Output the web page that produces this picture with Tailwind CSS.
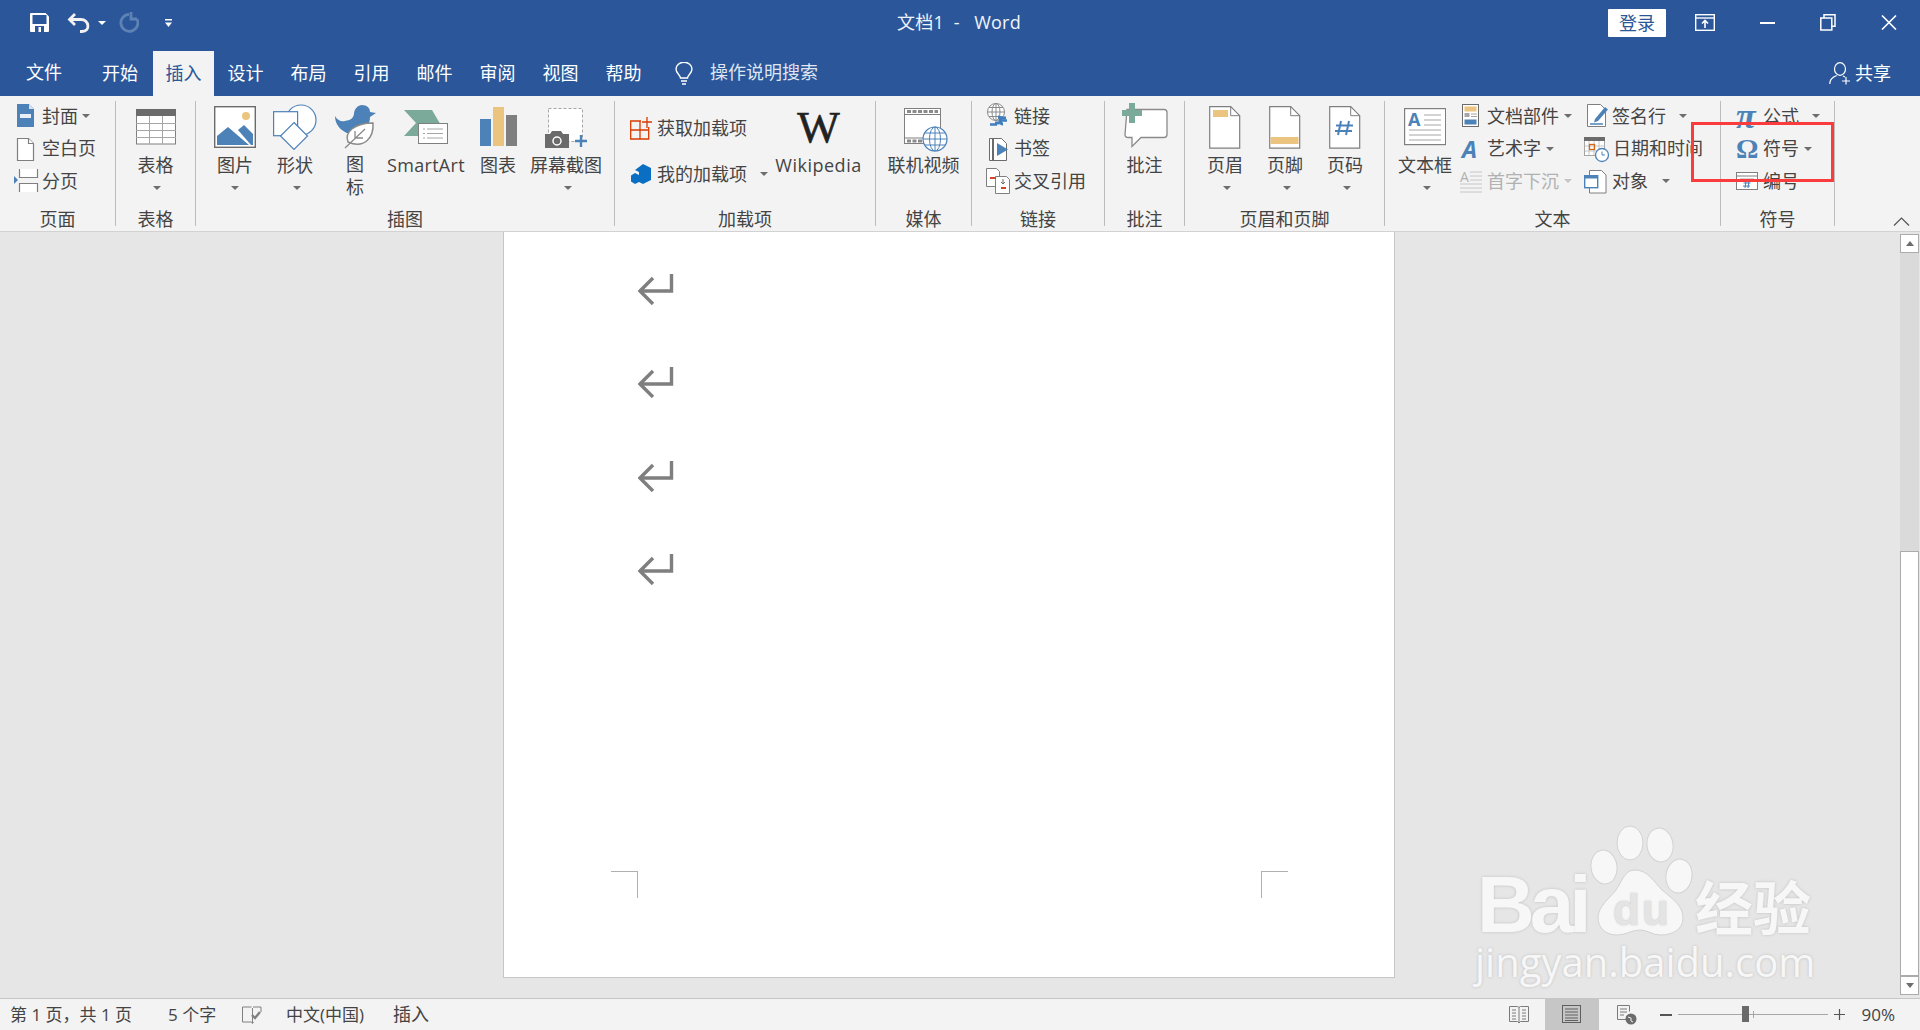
<!DOCTYPE html>
<html lang="zh-CN">
<head>
<meta charset="UTF-8">
<title>文档1 - Word</title>
<script src="https://cdn.jsdelivr.net/npm/@tailwindcss/browser@4"></script>
</head>
<body class="font-['Open_Sans','Noto_Sans_CJK_SC',sans-serif] text-[18px] text-[#444444]">
<div class="w-[1920px] h-[1030px] flex flex-col overflow-hidden relative">

  <!-- title bar + tabs -->
  <div class="h-[96px] bg-[#2b579a] text-white shrink-0">
    <div class="h-[45px] flex items-center">
      <div class="w-[897px] flex items-center pl-[30px]">
        <svg class="w-[19px] h-[19px]" viewBox="0 0 19 19"><path d="M0 1a1 1 0 0 1 1-1h14.500L19 3.500V18a1 1 0 0 1-1 1H1a1 1 0 0 1-1-1z" fill="#fff"/><rect x="2.500" y="2" width="14" height="9" fill="#2b579a"/><rect x="5" y="13" width="9" height="6" fill="#2b579a"/><rect x="8.500" y="14" width="2.500" height="5" fill="#fff"/></svg>
        <svg class="w-[23px] h-[20px] ml-[18px]" viewBox="0 0 23 20" fill="none" stroke="#f2f2f2" stroke-width="2.800"><path d="M8 1 2.500 6.500 8 12"/><path d="M3 6.500h11c8 0 10 12 1 12h-2"/></svg>
        <span class="ml-[8px] border-x-[4px] border-t-[4px] border-x-transparent border-t-white"></span>
        <svg class="w-[20px] h-[22px] ml-[13px]" viewBox="0 0 20 22" fill="none" stroke="#5f82b5" stroke-width="2.800"><path d="M10 2.300A8.500 8.500 0 1 0 18 7"/><path d="M12 0v7h6"/></svg>
        <svg class="w-[7px] h-[8px] ml-[26px]" viewBox="0 0 7 8" fill="#fff"><rect width="7" height="1.500"/><path d="M0 3.500h7L3.500 8z"/></svg>
      </div>
      <div class="w-[123px] whitespace-pre text-[#f0f4fa] tracking-[0.2px]">文档1  -   Word</div>
      <div class="ml-[588px] w-[58px] h-[28px] bg-white text-[#2b579a] text-center leading-[28px] rounded-[1px]">登录</div>
      <svg class="w-[20px] h-[17px] ml-[29px]" viewBox="0 0 20 17" fill="none" stroke="#fff" stroke-width="1.400"><rect x=".7" y=".7" width="18.600" height="15.600"/><path d="M.7 4h18.600"/><path d="M10 14V7M7 9.500 10 6.500l3 3" stroke-width="1.600"/></svg>
      <div class="w-[15px] h-[2px] bg-white ml-[45px]"></div>
      <svg class="w-[16px] h-[17px] ml-[45px]" viewBox="0 0 16 17" fill="none" stroke="#fff" stroke-width="1.500"><rect x=".8" y="4" width="11" height="12"/><path d="M4 4V.8h11v11.500h-3"/></svg>
      <svg class="w-[16px] h-[15px] ml-[45px]" viewBox="0 0 16 15" stroke="#fff" stroke-width="1.600"><path d="m1 .5 14 14M15 .5l-14 14"/></svg>
    </div>
    <div class="h-[45px] mt-[6px] flex items-center">
      <div class="w-[91px] pl-[26px] -mt-[2px]">文件</div>
      <div class="w-[62px] pl-[11px]">开始</div>
      <div class="w-[61px] h-[45px] leading-[45px] bg-[#f3f3f3] text-[#2b579a] text-center">插入</div>
      <div class="w-[63px] text-center">设计</div>
      <div class="w-[63px] text-center">布局</div>
      <div class="w-[63px] text-center">引用</div>
      <div class="w-[63px] text-center">邮件</div>
      <div class="w-[63px] text-center">审阅</div>
      <div class="w-[63px] text-center">视图</div>
      <div class="w-[63px] text-center">帮助</div>
      <svg class="w-[20px] h-[24px] ml-[19px]" viewBox="0 0 20 24" fill="none" stroke="#fff" stroke-width="1.400"><path d="M6.500 16c0-3-4.500-4.500-4.500-9a8 6.800 0 0 1 16 0c0 4.500-4.500 6-4.500 9z"/><path d="M7 19h6M8 22h4"/></svg>
      <div class="ml-[16px] -mt-[2px] text-[#dfe6f1]">操作说明搜索</div>
      <svg class="w-[23px] h-[23px] ml-auto" viewBox="0 0 23 23" fill="none" stroke="#fff" stroke-width="1.200"><ellipse cx="11" cy="7" rx="5.500" ry="6.300"/><path d="M.7 22c0-5 3-7 7-8.500M14 14l2 1"/><path d="M17 15v7.500M13 19h8"/></svg>
      <div class="ml-[3px] mr-[29px] -mt-[1px]">共享</div>
    </div>
  </div>

  <!-- ribbon -->
  <div class="h-[136px] bg-[#f3f3f3] border-b border-[#d2d2d2] flex items-start shrink-0 relative">

    <!-- 页面 -->
    <div class="w-[116px] h-[125px] mt-[5px] border-r border-[#bdbdbd] flex flex-col">
      <div class="h-[106px] shrink-0 pl-[14px] flex flex-col">
        <div class="h-[32.500px] -mt-[1px] flex items-center">
          <svg class="w-[28px] h-[28px] shrink-0" viewBox="0 0 28 28"><path d="M3 2h12l5 5v18H3z" fill="#4d82b8"/><path d="M15 2l5 5h-5z" fill="#d6e2ef"/><path d="M6 12h11v4H6z" fill="#e9eff6"/></svg>
          <span>封面</span><span class="ml-[4px] border-x-[4px] border-t-[4px] border-x-transparent border-t-[#6d6d6d]"></span>
        </div>
        <div class="h-[32.500px] flex items-center">
          <svg class="w-[28px] h-[28px] shrink-0" viewBox="0 0 28 28" fill="#fff" stroke="#7f7f7f" stroke-width="1.200"><path d="M3.500 3.500h11l5 5v17h-16z"/><path d="M14.500 3.500v5h5" /></svg>
          <span>空白页</span>
        </div>
        <div class="h-[32.500px] flex items-center">
          <svg class="w-[28px] h-[28px] shrink-0" viewBox="0 0 28 28"><path d="M0 9v8l4-4z" fill="#4d82b8"/><path d="M5.500 2v8.500h18V2" fill="#fff" stroke="#7f7f7f" stroke-width="1.200"/><path d="M5.500 25v-8.500h18V25" fill="#fff" stroke="#7f7f7f" stroke-width="1.200"/></svg>
          <span>分页</span>
        </div>
      </div>
      <div class="h-[24px] shrink-0 leading-[24px] text-center">页面</div>
    </div>

    <!-- 表格 -->
    <div class="w-[80px] h-[125px] mt-[5px] border-r border-[#bdbdbd] flex flex-col">
      <div class="h-[106px] shrink-0 flex flex-col items-center">
        <svg class="w-[40px] h-[52px]" viewBox="0 0 40 52"><rect x=".5" y="8.500" width="39" height="34.500" fill="#fff" stroke="#7f7f7f"/><rect y="8" width="40" height="7" fill="#6b6b6b"/><path d="M0 22.500h40M0 29.500h40M0 36.500h40M13.500 15v28M26.500 15v28" stroke="#a6a6a6"/></svg>
        <div class="h-[24px] leading-[24px]">表格</div>
        <div class="h-[22px] ml-[2px] flex items-center"><span class="border-x-[4px] border-t-[4px] border-x-transparent border-t-[#6d6d6d]"></span></div>
      </div>
      <div class="h-[24px] shrink-0 leading-[24px] text-center">表格</div>
    </div>

    <!-- 插图 -->
    <div class="w-[419px] h-[125px] mt-[5px] border-r border-[#bdbdbd] flex flex-col">
      <div class="h-[106px] shrink-0 flex pl-[9px]">
        <div class="w-[60px] flex flex-col items-center">
          <svg class="w-[42px] h-[52px]" viewBox="0 0 42 52"><rect x=".7" y="5.700" width="40.600" height="40.600" fill="#fff" stroke="#6b6b6b" stroke-width="1.400"/><circle cx="32" cy="15" r="4" fill="#ebc47f"/><path d="M3 44v-9l11-9 21 18z" fill="#4d82b8"/><path d="M24 29l6-5 9 9v11h-2z" fill="#4d82b8"/></svg>
          <div class="h-[24px] leading-[24px]">图片</div>
          <div class="h-[22px] flex items-center"><span class="border-x-[4px] border-t-[4px] border-x-transparent border-t-[#6d6d6d]"></span></div>
        </div>
        <div class="w-[60px] flex flex-col items-center">
          <svg class="w-[44px] h-[52px]" viewBox="0 0 44 52" fill="#fff" stroke="#4d82b8" stroke-width="1.200"><circle cx="28" cy="19" r="15"/><rect x=".6" y="10.700" width="24" height="24"/><path d="M21 21.500 34.500 35 21 48.500 7.500 35z"/></svg>
          <div class="h-[24px] leading-[24px]">形状</div>
          <div class="h-[22px] ml-[4px] flex items-center"><span class="border-x-[4px] border-t-[4px] border-x-transparent border-t-[#6d6d6d]"></span></div>
        </div>
        <div class="w-[60px] flex flex-col items-center">
          <svg class="w-[41px] h-[52px]" viewBox="0 0 41 52"><path d="M0 15c2 4 6 6 10 5 5-1 8-2 9-7 0-5 4-9 8-9 5 0 8 3 8 7l6 1-6 4c0 8-5 15-13 17C12 35 0 27 0 15z" fill="#4d82b8"/><path d="M13 41C9 31 20 22 38 22c1 15-9 26-25 19z" fill="#fff" stroke="#8a8a8a" stroke-width="1.500"/><path d="M10 47 30 28M20 37v-7M20 37h8" fill="none" stroke="#8a8a8a" stroke-width="1.300"/></svg>
          <div class="h-[23px] leading-[23px]">图</div>
          <div class="h-[23px] leading-[23px]">标</div>
        </div>
        <div class="w-[82px] flex flex-col items-center">
          <svg class="w-[44px] h-[52px]" viewBox="0 0 44 52"><path d="M0 9h28l10 17-10 9H0l12-13z" fill="#7ba99a"/><rect x="14.500" y="22.500" width="29" height="20" fill="#fff" stroke="#7f7f7f"/><path d="M19 28h2M23 28h16M19 32.500h2M23 32.500h16M19 37h2M23 37h16" stroke="#a6a6a6"/></svg>
          <div class="h-[24px] leading-[24px] tracking-[0.3px]">SmartArt</div>
        </div>
        <div class="w-[62px] flex flex-col items-center">
          <svg class="w-[37px] h-[52px]" viewBox="0 0 37 52"><rect y="18" width="11" height="27" fill="#4d82b8"/><rect x="13" y="6" width="11" height="39" fill="#ebc47f"/><rect x="26" y="14" width="11" height="31" fill="#7f7f7f"/></svg>
          <div class="h-[24px] leading-[24px]">图表</div>
        </div>
        <div class="w-[74px] flex flex-col items-center">
          <svg class="w-[42px] h-[52px]" viewBox="0 0 42 52"><rect x="3.500" y="7.500" width="34" height="33" fill="#fff" stroke="#a6a6a6" stroke-dasharray="3 2"/><path d="M0 33h5l2-3h9l2 3h6v14H0z" fill="#6b6b6b"/><circle cx="12" cy="40" r="4" fill="none" stroke="#fff" stroke-width="1.500"/><path d="M30 40h12M36 34v12" stroke="#4d82b8" stroke-width="2.400"/></svg>
          <div class="h-[24px] leading-[24px]">屏幕截图</div>
          <div class="h-[22px] ml-[4px] flex items-center"><span class="border-x-[4px] border-t-[4px] border-x-transparent border-t-[#6d6d6d]"></span></div>
        </div>
      </div>
      <div class="h-[24px] shrink-0 leading-[24px] text-center">插图</div>
    </div>

    <!-- 加载项 -->
    <div class="w-[261px] h-[125px] mt-[5px] border-r border-[#bdbdbd] flex flex-col">
      <div class="h-[106px] shrink-0 flex">
        <div class="w-[160px] pl-[15px] pt-[4px] flex flex-col">
          <div class="h-[46px] flex items-center">
            <svg class="w-[27px] h-[24px] shrink-0" viewBox="0 0 27 24" fill="none" stroke="#d83b01" stroke-width="1.300"><path d="M11 5H.7v18h18v-12M.7 14h18M10 5v18"/><path d="M17 1v11M12 6h10"/></svg>
            <span>获取加载项</span>
          </div>
          <div class="h-[46px] flex items-center">
            <svg class="w-[27px] h-[22px] shrink-0" viewBox="0 0 27 22"><path d="M13 1l8 4v12l-8 4-4-2V9L5 7z" fill="#0a6fc2"/><path d="M5 10l5 2.500v6L5 21 1 18.500v-6z" fill="#0a6fc2"/></svg>
            <span>我的加载项</span><span class="ml-[13px] border-x-[4px] border-t-[4px] border-x-transparent border-t-[#6d6d6d]"></span>
          </div>
        </div>
        <div class="w-[87px] flex flex-col items-center">
          <div class="h-[52px] flex items-center font-['Liberation_Serif',serif] text-[45px] leading-none text-[#222222] [-webkit-text-stroke:0.6px_#222222]">W</div>
          <div class="h-[24px] leading-[24px] tracking-[0.5px]">Wikipedia</div>
        </div>
      </div>
      <div class="h-[24px] shrink-0 leading-[24px] text-center">加载项</div>
    </div>

    <!-- 媒体 -->
    <div class="w-[96px] h-[125px] mt-[5px] border-r border-[#bdbdbd] flex flex-col">
      <div class="h-[106px] shrink-0 flex flex-col items-center">
        <svg class="w-[44px] h-[52px] ml-[4px]" viewBox="0 0 44 52"><rect x=".5" y="7.500" width="36" height="35" fill="#fff" stroke="#7f7f7f"/><path d="M.5 13.500h36M.5 37h36" stroke="#7f7f7f"/><path d="M3 10.500h31M3 40h31" stroke="#8a8a8a" stroke-width="3" stroke-dasharray="4 1.500"/><circle cx="31" cy="38" r="12" fill="#fff" stroke="#4d82b8" stroke-width="1.200"/><ellipse cx="31" cy="38" rx="5.500" ry="12" fill="none" stroke="#4d82b8"/><path d="M19 38h24M21 32h20M21 44h20M31 26v24" stroke="#4d82b8"/></svg>
        <div class="h-[24px] leading-[24px]">联机视频</div>
      </div>
      <div class="h-[24px] shrink-0 leading-[24px] text-center">媒体</div>
    </div>

    <!-- 链接 -->
    <div class="w-[133px] h-[125px] mt-[5px] border-r border-[#bdbdbd] flex flex-col">
      <div class="h-[106px] shrink-0 pl-[14px] flex flex-col">
        <div class="h-[32.500px] -mt-[1px] flex items-center">
          <svg class="w-[28px] h-[28px] shrink-0" viewBox="0 0 28 28"><circle cx="10" cy="10" r="8.500" fill="#fff" stroke="#8a8a8a"/><path d="M1.500 10h17M3 5.500h14M3 14.500h14M10 1.500v17" stroke="#8a8a8a"/><ellipse cx="10" cy="10" rx="4" ry="8.500" fill="none" stroke="#8a8a8a"/><path d="M9 21h3a3 3 0 0 0 0-6M20 16h-3a3 3 0 0 0 0 6" fill="none" stroke="#3f7fbf" stroke-width="3"/><path d="M4 22.500h7M13 18.500h8" stroke="#3f7fbf" stroke-width="2.500"/></svg>
          <span>链接</span>
        </div>
        <div class="h-[32.500px] flex items-center">
          <svg class="w-[28px] h-[28px] shrink-0" viewBox="0 0 28 28"><path d="M3.500 3.500h12l5 5v17h-17z" fill="#fff" stroke="#6b6b6b"/><rect x="6" y="4" width="2" height="21" fill="#6b6b6b"/><path d="M11 8l11 6.500L11 21z" fill="#4d82b8"/></svg>
          <span>书签</span>
        </div>
        <div class="h-[32.500px] flex items-center">
          <svg class="w-[28px] h-[28px] shrink-0" viewBox="0 0 28 28"><path d="M.5 1.500h10l3 3v15H.5z" fill="#fff" stroke="#7f7f7f"/><path d="M9.500 9.500h11l3 3v14h-14z" fill="#fff" stroke="#7f7f7f"/><rect x="4" y="10" width="6" height="2" fill="#d0452b"/><rect x="15" y="20" width="5" height="2" fill="#d0452b"/><path d="M17 12v5M15 15l2 2 2-2" fill="none" stroke="#6b6b6b"/></svg>
          <span>交叉引用</span>
        </div>
      </div>
      <div class="h-[24px] shrink-0 leading-[24px] text-center">链接</div>
    </div>

    <!-- 批注 -->
    <div class="w-[80px] h-[125px] mt-[5px] border-r border-[#bdbdbd] flex flex-col">
      <div class="h-[106px] shrink-0 flex flex-col items-center">
        <svg class="w-[46px] h-[52px]" viewBox="0 0 46 52"><path d="M5 8.500h37a3 3 0 0 1 3 3v22a3 3 0 0 1-3 3H19l-9 9v-9H6a3 3 0 0 1-3-3z" fill="#fff" stroke="#8a8a8a" stroke-width="1.300"/><path d="M10 2v20M0 12h20" stroke="#7ba99a" stroke-width="6"/></svg>
        <div class="h-[24px] leading-[24px]">批注</div>
      </div>
      <div class="h-[24px] shrink-0 leading-[24px] text-center">批注</div>
    </div>

    <!-- 页眉和页脚 -->
    <div class="w-[200px] h-[125px] mt-[5px] border-r border-[#bdbdbd] flex flex-col">
      <div class="h-[106px] shrink-0 flex pl-[10px]">
        <div class="w-[60px] flex flex-col items-center">
          <svg class="w-[32px] h-[52px]" viewBox="0 0 32 52"><path d="M.7 5.700h21l9 9v32.500H.7z" fill="#fff" stroke="#7f7f7f" stroke-width="1.200"/><path d="M21.700 5.700v9h9" fill="none" stroke="#7f7f7f"/><rect x="4" y="9" width="15" height="7" fill="#ebc47f"/></svg>
          <div class="h-[24px] leading-[24px]">页眉</div>
          <div class="h-[22px] ml-[4px] flex items-center"><span class="border-x-[4px] border-t-[4px] border-x-transparent border-t-[#6d6d6d]"></span></div>
        </div>
        <div class="w-[60px] flex flex-col items-center">
          <svg class="w-[32px] h-[52px]" viewBox="0 0 32 52"><path d="M.7 5.700h21l9 9v32.500H.7z" fill="#fff" stroke="#7f7f7f" stroke-width="1.200"/><path d="M21.700 5.700v9h9" fill="none" stroke="#7f7f7f"/><rect x="1.500" y="36" width="28" height="7" fill="#ebc47f"/></svg>
          <div class="h-[24px] leading-[24px]">页脚</div>
          <div class="h-[22px] ml-[4px] flex items-center"><span class="border-x-[4px] border-t-[4px] border-x-transparent border-t-[#6d6d6d]"></span></div>
        </div>
        <div class="w-[60px] flex flex-col items-center">
          <svg class="w-[32px] h-[52px]" viewBox="0 0 32 52"><path d="M.7 5.700h21l9 9v32.500H.7z" fill="#fff" stroke="#7f7f7f" stroke-width="1.200"/><path d="M21.700 5.700v9h9" fill="none" stroke="#7f7f7f"/><path d="M12 20l-3 14M20 20l-3 14M7 24.500h17M6 30h17" stroke="#4d82b8" stroke-width="2"/></svg>
          <div class="h-[24px] leading-[24px]">页码</div>
          <div class="h-[22px] ml-[4px] flex items-center"><span class="border-x-[4px] border-t-[4px] border-x-transparent border-t-[#6d6d6d]"></span></div>
        </div>
      </div>
      <div class="h-[24px] shrink-0 leading-[24px] text-center">页眉和页脚</div>
    </div>

    <!-- 文本 -->
    <div class="w-[336px] h-[125px] mt-[5px] border-r border-[#bdbdbd] flex flex-col">
      <div class="h-[106px] shrink-0 flex">
        <div class="w-[80px] -mr-[6px] flex flex-col items-center shrink-0">
          <svg class="w-[42px] h-[52px]" viewBox="0 0 42 52"><rect x=".6" y="7.600" width="41" height="36" fill="#fff" stroke="#7f7f7f" stroke-width="1.200"/><text x="4" y="25" font-size="18" font-weight="700" fill="#4d82b8">A</text><path d="M20 14h17M20 19h17M20 24h17M5 29h32M5 34h32M5 39h32" stroke="#a6a6a6"/></svg>
          <div class="h-[24px] leading-[24px]">文本框</div>
          <div class="h-[22px] ml-[4px] flex items-center"><span class="border-x-[4px] border-t-[4px] border-x-transparent border-t-[#6d6d6d]"></span></div>
        </div>
        <div class="w-[125px] flex flex-col shrink-0">
          <div class="h-[32.500px] -mt-[1px] flex items-center">
            <svg class="w-[28px] h-[28px] shrink-0" viewBox="0 0 28 28"><rect x="3.500" y="2.500" width="16" height="22" fill="#fff" stroke="#6b6b6b"/><rect x="5.500" y="4.500" width="12" height="5" fill="#ebc47f"/><rect x="5.500" y="11" width="5" height="4" fill="#a6a6a6"/><path d="M12 12h6M12 14.500h6" stroke="#a6a6a6"/><rect x="5.500" y="17.500" width="12" height="5" fill="#4d82b8"/></svg>
            <span>文档部件</span><span class="ml-[5px] border-x-[4px] border-t-[4px] border-x-transparent border-t-[#6d6d6d]"></span>
          </div>
          <div class="h-[32.500px] flex items-center">
            <span class="w-[28px] shrink-0 pl-[3px] text-[#4d82b8] text-[24px] leading-none font-bold italic">A</span>
            <span>艺术字</span><span class="ml-[5px] border-x-[4px] border-t-[4px] border-x-transparent border-t-[#6d6d6d]"></span>
          </div>
          <div class="h-[32.500px] flex items-center text-[#b1b1b1]">
            <svg class="w-[28px] h-[28px] shrink-0" viewBox="0 0 28 28"><text x="1" y="15" font-size="14" fill="#b1b1b1">A</text><path d="M11 5h12M11 9h12M11 13h12M1 17h22M1 21h22M1 25h22" stroke="#c6c6c6"/></svg>
            <span>首字下沉</span><span class="ml-[5px] border-x-[4px] border-t-[4px] border-x-transparent border-t-[#c4c4c4]"></span>
          </div>
        </div>
        <div class="flex-1 flex flex-col">
          <div class="h-[32.500px] -mt-[1px] flex items-center">
            <svg class="w-[28px] h-[28px] shrink-0" viewBox="0 0 28 28"><path d="M3.500 2.500h13l5 5v17h-18z" fill="#fff" stroke="#7f7f7f"/><path d="M11 17 21 5l3 2.500L14 19l-4 1.500z" fill="#4d82b8"/><path d="M6 22h13" stroke="#4d82b8" stroke-width="1.500"/></svg>
            <span>签名行</span><span class="ml-[13px] border-x-[4px] border-t-[4px] border-x-transparent border-t-[#6d6d6d]"></span>
          </div>
          <div class="h-[32.500px] flex items-center">
            <svg class="w-[29px] h-[28px] shrink-0" viewBox="0 0 29 28"><rect x=".5" y="2.500" width="20" height="18" fill="#fff" stroke="#a6a6a6"/><rect y="2" width="21" height="4" fill="#6b6b6b"/><path d="M5 6v14M10 6v14M15 6v14M1 11h19M1 16h19" stroke="#c6c6c6"/><rect x="5.500" y="9.500" width="5" height="5" fill="none" stroke="#d2691e" stroke-width="1.300"/><circle cx="18" cy="20" r="6.500" fill="#fff" stroke="#4d82b8" stroke-width="1.300"/><path d="M18 16.500V20h3" fill="none" stroke="#4d82b8"/></svg>
            <span>日期和时间</span>
          </div>
          <div class="h-[32.500px] flex items-center">
            <svg class="w-[28px] h-[28px] shrink-0" viewBox="0 0 28 28"><path d="M5.500 3.500h12l4.500 4.500v18h-16.500z" fill="#fff" stroke="#7f7f7f"/><rect x=".7" y="8.700" width="13" height="12" fill="#fff" stroke="#4d82b8" stroke-width="1.400"/><rect y="8" width="14" height="3.500" fill="#4d82b8"/></svg>
            <span>对象</span><span class="ml-[14px] border-x-[4px] border-t-[4px] border-x-transparent border-t-[#6d6d6d]"></span>
          </div>
        </div>
      </div>
      <div class="h-[24px] shrink-0 leading-[24px] text-center">文本</div>
    </div>

    <!-- 符号 -->
    <div class="w-[114px] h-[125px] mt-[5px] border-r border-[#bdbdbd] flex flex-col">
      <div class="h-[106px] shrink-0 pl-[15px] flex flex-col">
        <div class="h-[32.500px] -mt-[1px] flex items-center">
          <span class="w-[27px] shrink-0 font-['Liberation_Serif',serif] text-[#4d82b8] text-[36px] leading-[24px] font-bold italic">π</span>
          <span>公式</span><span class="ml-[13px] border-x-[4px] border-t-[4px] border-x-transparent border-t-[#6d6d6d]"></span>
        </div>
        <div class="h-[32.500px] flex items-center">
          <span class="w-[27px] shrink-0 font-['Liberation_Serif',serif] text-[#4d82b8] text-[28px] leading-none font-bold">Ω</span>
          <span>符号</span><span class="ml-[5px] border-x-[4px] border-t-[4px] border-x-transparent border-t-[#6d6d6d]"></span>
        </div>
        <div class="h-[32.500px] flex items-center">
          <svg class="w-[27px] h-[20px] shrink-0" viewBox="0 0 27 20"><rect x=".5" y="1.500" width="21" height="17" fill="#fff" stroke="#7f7f7f"/><path d="M1 5h20" stroke="#7f7f7f"/><path d="M4 8h14" stroke="#a6a6a6"/><path d="M10 10l-1 7M13 10l-1 7M7.500 12h7M7 15h7" stroke="#4d82b8" stroke-width="1.100"/></svg>
          <span>编号</span>
        </div>
      </div>
      <div class="h-[24px] shrink-0 leading-[24px] text-center">符号</div>
    </div>

    <svg class="absolute left-[1893px] top-[121px] w-[17px] h-[9px]" viewBox="0 0 17 9" fill="none" stroke="#555555" stroke-width="1.200"><path d="M1 8.500 8.500 1 16 8.500"/></svg>
    <!-- red annotation -->
    <div class="absolute left-[1691px] top-[26px] w-[143px] h-[60px] border-[3px] border-[#fb3c3c]"></div>
  </div>

  <!-- document area -->
  <div class="flex-1 flex bg-[#e6e6e6] relative">
    <div class="flex-1 pl-[503px]">
      <div class="w-[892px] h-[746px] bg-white border-x border-b border-[#c6c6c6] relative pl-[134px] pt-[42px] flex flex-col gap-[62.300px]">
        <svg class="w-[36px] h-[31px]" viewBox="0 0 36 31" fill="none" stroke="#7f7f7f" stroke-width="3.400"><path d="M15 4 2 17 15 30"/><path d="M2 17h31.500V0"/></svg>
        <svg class="w-[36px] h-[31px]" viewBox="0 0 36 31" fill="none" stroke="#7f7f7f" stroke-width="3.400"><path d="M15 4 2 17 15 30"/><path d="M2 17h31.500V0"/></svg>
        <svg class="w-[36px] h-[31px]" viewBox="0 0 36 31" fill="none" stroke="#7f7f7f" stroke-width="3.400"><path d="M15 4 2 17 15 30"/><path d="M2 17h31.500V0"/></svg>
        <svg class="w-[36px] h-[31px]" viewBox="0 0 36 31" fill="none" stroke="#7f7f7f" stroke-width="3.400"><path d="M15 4 2 17 15 30"/><path d="M2 17h31.500V0"/></svg>
        <div class="absolute left-[107px] top-[639px] w-[27px] h-[27px] border-t border-r border-[#b0b0b0]"></div>
        <div class="absolute left-[757px] top-[639px] w-[27px] h-[27px] border-t border-l border-[#b0b0b0]"></div>
      </div>
    </div>
    <!-- scrollbar -->
    <div class="w-[20px] flex flex-col pr-[1px] pt-[2px] pb-[3px]">
      <div class="h-[19px] bg-white border border-[#ababab] flex items-center justify-center shrink-0"><span class="border-x-[4px] border-b-[5px] border-x-transparent border-b-[#6d6d6d]"></span></div>
      <div class="h-[298px] bg-[#dadada] shrink-0"></div>
      <div class="flex-1 bg-white border border-[#ababab]"></div>
      <div class="h-[19px] bg-white border border-[#ababab] flex items-center justify-center shrink-0"><span class="border-x-[4px] border-t-[5px] border-x-transparent border-t-[#6d6d6d]"></span></div>
    </div>

    <!-- watermark -->
    <svg class="absolute left-[1590px] top-[590px] w-[105px] h-[125px]" viewBox="0 0 105 125" fill="#f7f7f7" stroke="#d2d2d2" stroke-width="1"><ellipse cx="40" cy="21" rx="13" ry="17"/><ellipse cx="70" cy="23" rx="13" ry="17" transform="rotate(-8 70 23)"/><ellipse cx="14" cy="45" rx="13" ry="17" transform="rotate(-8 14 45)"/><ellipse cx="89" cy="54" rx="13" ry="17" transform="rotate(8 89 54)"/><path d="M45 48C58 48 64 60 72 68C84 78 93 84 93 96C93 108 82 113 70 113C62 113 58 108 50 108C42 108 36 113 27 113C16 113 8 106 8 96C8 84 20 76 26 68C32 60 34 48 45 48z"/></svg>
    <div class="absolute left-[1613px] top-[656px] font-['Liberation_Sans',sans-serif] text-[44px] leading-none font-bold tracking-[2px] text-[#e4e4e4] [text-shadow:0_0_2px_#c4c4c4]">du</div>
    <div class="absolute left-[1477px] top-[633px] font-['Liberation_Sans',sans-serif] text-[80px] leading-none font-bold text-[#f7f7f7] tracking-[-5px] [text-shadow:0_0_3px_#bdbdbd]">Bai</div>
    <div class="absolute left-[1695px] top-[644px] font-['Noto_Sans_CJK_SC',sans-serif] text-[58px] leading-none font-bold text-[#f7f7f7] [text-shadow:0_0_3px_#bdbdbd]">经验</div>
    <div class="absolute left-[1475px] top-[710px] text-[40px] leading-none text-[#f7f7f7] [text-shadow:0_0_3px_#bdbdbd]">jingyan.baidu.com</div>
  </div>

  <!-- status bar -->
  <div class="h-[32px] bg-[#f3f3f3] border-t border-[#c6c6c6] flex items-center shrink-0 text-[17px]">
    <span class="ml-[10px] w-[158px] whitespace-pre">第 1 页，共 1 页</span>
    <span class="w-[74px] whitespace-pre">5 个字</span>
    <svg class="w-[20px] h-[20px]" viewBox="0 0 20 20" fill="none" stroke="#808080"><path d="M9.500 2H.5v15h9l1 1.500 1-1.500M10.500 3v15M11 2h8v5"/><path d="M10 10l3 3 5-6" stroke-width="2.400"/></svg>
    <span class="ml-[24px] w-[107px]">中文(中国)</span>
    <span class="text-[18px]">插入</span>
    <svg class="w-[20px] h-[20px] ml-auto" viewBox="0 0 20 20" fill="none" stroke="#7a7a7a"><path d="M.5 1.500h8l1.500 1 1.500-1h8v15h-8L10 18l-1.500-1.500h-8zM10 2.500v15M3 5h4M3 8h4M3 11h4M3 14h4M13 5h4M13 8h4M13 11h4M13 14h4"/></svg>
    <div class="ml-[16px] w-[54px] h-[31px] bg-[#c6c6c6] flex items-center justify-center">
      <svg class="w-[19px] h-[19px]" viewBox="0 0 19 19" fill="none" stroke="#5f5f5f"><rect x=".5" y=".5" width="18" height="17"/><path d="M3 4h13M3 7h13M3 10h13M3 13h13M3 15.500h13"/></svg>
    </div>
    <svg class="w-[20px] h-[20px] ml-[18px]" viewBox="0 0 20 20" fill="none" stroke="#7a7a7a"><path d="M12 14.500H.5V.5h12v6M3 4h7M3 7h7M3 10h4"/><circle cx="14" cy="14" r="5.500" fill="#6b6b6b" stroke="none"/><path d="M11 12l3 1v3l2 1" stroke="#f3f3f3"/></svg>
    <div class="w-[12px] h-[2px] bg-[#555555] ml-[23px]"></div>
    <div class="w-[150px] h-[1px] bg-[#a6a6a6] ml-[6px] relative">
      <div class="absolute left-[64px] -top-[8px] w-[7px] h-[16px] bg-[#6a6a6a]"></div>
      <div class="absolute left-[75px] -top-[3px] w-[1px] h-[7px] bg-[#a6a6a6]"></div>
    </div>
    <svg class="w-[11px] h-[11px] ml-[6px]" viewBox="0 0 11 11" stroke="#555555" stroke-width="1.200"><path d="M0 5.500h11M5.500 0v11"/></svg>
    <span class="ml-[17px] mr-[25px]">90%</span>
  </div>
</div>
</body>
</html>
